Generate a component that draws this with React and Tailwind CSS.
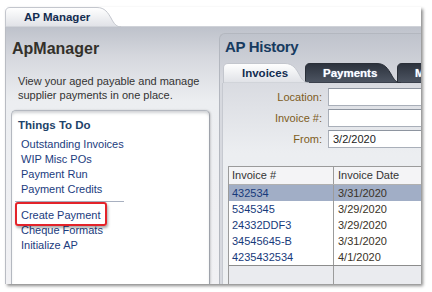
import React from "react";

function TabShape({ w, id, active }) {
  const d = `M0.5,20 L0.5,5 Q0.5,0.5 5,0.5 L${w - 24},0.5 C${w - 16},0.5 ${w - 13},6 ${w - 10},11 C${w - 7},17 ${w - 4},20 ${w},20 Z`;
  return (
    <svg className="absolute inset-0" width={w} height={20} viewBox={`0 0 ${w} 20`}>
      <defs>
        <linearGradient id={id} x1="0" y1="0" x2="0" y2="1">
          {active ? (
            <>
              <stop offset="0" stopColor="#ffffff" />
              <stop offset="1" stopColor="#dfe1e6" />
            </>
          ) : (
            <>
              <stop offset="0" stopColor="#2c323d" />
              <stop offset="1" stopColor="#4e5663" />
            </>
          )}
        </linearGradient>
      </defs>
      <path d={d} fill={`url(#${id})`} stroke={active ? "#c3c6cd" : "#2a2f38"} strokeWidth="1" />
    </svg>
  );
}

function Tab({ w, label, active, id, cls }) {
  return (
    <div className={`relative h-[20px] shrink-0 ${cls}`} style={{ width: w }}>
      <TabShape w={w} id={id} active={active} />
      <span
        className={`relative block pt-[3px] text-[11.5px] font-bold leading-[14px] whitespace-nowrap ${
          active ? "text-[#132c50] pl-[19px]" : "text-white pl-[18px] [text-shadow:0_0_1px_#9fc0e8]"
        }`}
      >
        {label}
      </span>
    </div>
  );
}

const links1 = ["Outstanding Invoices", "WIP Misc POs", "Payment Run", "Payment Credits"];
const links2 = ["Create Payment", "Cheque Formats", "Initialize AP"];
const rows = [
  ["432534", "3/31/2020"],
  ["5345345", "3/29/2020"],
  ["24332DDF3", "3/29/2020"],
  ["34545645-B", "3/31/2020"],
  ["4235432534", "4/1/2020"],
];

export default function App() {
  return (
    <div
      className="w-[432px] h-[292px] bg-white overflow-hidden pl-[5px] pt-[7px]"
      style={{ fontFamily: '"Liberation Sans", Arial, sans-serif' }}
    >
      <div className="w-[416px] h-[277px] flex flex-col shadow-[2px_2px_3px_rgba(0,0,0,0.45)] bg-white">
        {/* top tab */}
        <div className="h-[20px] flex items-end border-b border-[#cfd2d8] bg-white">
          <Tab w={116} label="AP Manager" active id="g-top" cls="-mb-px" />
        </div>
        {/* body */}
        <div className="flex-1 flex border-l border-[#b9bcc3] overflow-hidden bg-[linear-gradient(to_bottom,#bec2cb_0px,#d6d8de_30px,#eceef1_75px,#f1f1f4_100%)]">
          {/* left column */}
          <div className="w-[208px] shrink-0 flex flex-col">
            <div className="pl-[6px] mt-[12px] text-[16px] leading-[20px] font-bold text-[#33302a] whitespace-nowrap">ApManager</div>
            <div className="pl-[12px] mt-[15px] text-[11px] leading-[14px] text-[#333333] whitespace-nowrap">
              <div>View your aged payable and manage</div>
              <div>supplier payments in one place.</div>
            </div>
            <div className="ml-[5px] mt-[8px] w-[199px] flex-1 bg-white border border-[#b4b8c0] border-r-[#9ea2aa] border-b-0 rounded-t-[5px] shadow-[inset_0_3px_3px_-1px_rgba(120,125,135,0.35),1px_0_2px_rgba(0,0,0,0.15)] relative">
              <div className="pl-[6px] pt-[7px] text-[11.5px] leading-[14px] font-bold text-[#1d4369]">Things To Do</div>
              <div className="mt-[5px] pl-[9px] text-[11px] leading-[15px] text-[#1b3c7e]">
                {links1.map((l) => (
                  <div key={l}>{l}</div>
                ))}
              </div>
              <div className="ml-[3px] mt-[4px] w-[109px] border-t border-[#a8b0c0]" />
              <div className="mt-[6px] pl-[9px] text-[11px] leading-[15px] text-[#1b3c7e]">
                {links2.map((l) => (
                  <div key={l}>{l}</div>
                ))}
              </div>
              <div className="absolute left-[3px] top-[91px] w-[92px] h-[24px] border-2 border-[#e3232a] rounded-[3px] shadow-[1px_2px_3px_rgba(0,0,0,0.35)]" />
            </div>
          </div>
          {/* right panel */}
          <div className="ml-[5px] mt-[6px] flex-1 min-w-0 flex flex-col border-l border-t border-[#b3b7bf] rounded-tl-[6px] overflow-hidden bg-[linear-gradient(to_bottom,#bfc3cc,#d7d9df_48px)]">
            <div className="pl-[5px] pt-[4px] text-[15px] leading-[18px] font-bold tracking-[-0.3px] text-[#173b60]">AP History</div>
            <div className="mt-[7px] pl-[3px] flex">
              <Tab w={86} label="Invoices" active id="g-inv" cls="z-20" />
              <Tab w={96} label="Payments" id="g-pay" cls="-ml-[4px] z-10" />
              <Tab w={96} label="Misc" id="g-misc" cls="-ml-[4px]" />
            </div>
            <div className="flex-1 ml-[2px] border-l border-[#c6c9d0] bg-[linear-gradient(to_bottom,#d9dbe1,#eceef1_70px,#eef0f2)] flex flex-col">
              <div className="pt-[5px] flex flex-col gap-[3px]">
                {[
                  ["Location:", ""],
                  ["Invoice #:", ""],
                  ["From:", "3/2/2020"],
                ].map(([lab, val]) => (
                  <div key={lab} className="flex items-center h-[18px]">
                    <div className="w-[105px] shrink-0 text-right text-[11px] text-[#7d5c1c] pr-[6px]">{lab}</div>
                    <div className="w-[200px] shrink-0 h-[18px] bg-white border border-[#a9afb9] border-t-[#8e95a0] text-[11px] leading-[16px] pl-[4px] text-[#222]">
                      {val}
                    </div>
                  </div>
                ))}
              </div>
              <div className="mt-[18px] ml-[5px] w-[240px] flex-1 flex flex-col border-l border-t border-[#9b9b9b] bg-[#eaebef] text-[11px]">
                <div className="flex h-[18px] bg-[#f4f4f6] border-b border-[#b0b0b0] text-[#333]">
                  <div className="w-[105px] border-r border-[#9b9b9b] pl-[3px] leading-[17px]">Invoice #</div>
                  <div className="flex-1 pl-[4px] leading-[17px]">Invoice Date</div>
                </div>
                {rows.map(([a, b], i) => (
                  <div
                    key={a}
                    className={`flex h-[16px] ${i === 0 ? "bg-[#a1aec6]" : "bg-white"} ${
                      i === rows.length - 1 ? "border-b border-[#8c8c8c] h-[17px]" : ""
                    }`}
                  >
                    <div className="w-[105px] border-r border-[#9b9b9b] pl-[3px] leading-[16px] text-[#173a7b]">{a}</div>
                    <div className="flex-1 pl-[4px] leading-[16px] text-[#3a3226]">{b}</div>
                  </div>
                ))}
                <div className="flex-1 flex">
                  <div className="w-[105px] border-r border-[#9b9b9b]" />
                </div>
              </div>
            </div>
          </div>
        </div>
      </div>
    </div>
  );
}
